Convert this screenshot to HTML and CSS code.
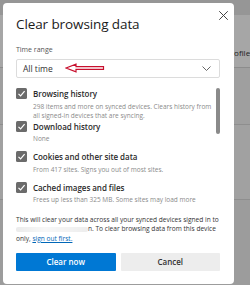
FILE: index.html
```html
<!DOCTYPE html>
<html lang="en">
<head>
    <meta charset="UTF-8">
    <meta name="viewport" content="width=device-width, initial-scale=1.0">
    <title>Clear browsing data</title>
    <link rel="stylesheet" href="styles.css">
</head>
<body>
    <div class="page">
        <div class="band band-top"></div>
        <div class="band band-profile"><span>Profile</span></div>
        <div class="band band-mid"></div>
        <div class="band band-low"></div>
        <div class="band band-bottom"></div>
    </div>

    <div class="dialog">
        <button class="close-btn" aria-label="Close">
            <svg width="9" height="9" viewBox="0 0 9 9" fill="none" stroke="#444" stroke-width="1" stroke-linecap="round">
                <line x1="0.5" y1="0.5" x2="8.5" y2="8.5"></line>
                <line x1="8.5" y1="0.5" x2="0.5" y2="8.5"></line>
            </svg>
        </button>
        <h2 class="title">Clear browsing data</h2>

        <div class="field-label">Time range</div>
        <div class="select">
            <span>All time</span>
            <svg class="chevron" width="9" height="5" viewBox="0 0 9 5" fill="none" stroke="#555" stroke-width="0.9">
                <polyline points="0.5 0.5 4.5 4.5 8.5 0.5"></polyline>
            </svg>
            <svg class="annotation" width="40" height="10" viewBox="0 0 40 10" fill="none" stroke="#c8102e" stroke-width="1.2" stroke-linejoin="miter">
                <polygon points="1 5 11 1.2 11 3.6 38.5 3.6 38.5 6.4 11 6.4 11 8.8"></polygon>
            </svg>
        </div>

        <div class="options">
            <div class="scrollbar"></div>
            <div class="option option-first">
                <span class="checkbox">
                    <svg width="11" height="11" viewBox="0 0 11 11" fill="none" stroke="#fff" stroke-width="1.2"><polyline points="2.5 5.8 4.6 7.9 8.6 3.2"></polyline></svg>
                </span>
                <div class="option-text">
                    <div class="option-title">Browsing history</div>
                    <div class="option-desc">298 items and more on synced devices. Clears history from all signed-in devices that are syncing.</div>
                </div>
            </div>
            <div class="option">
                <span class="checkbox">
                    <svg width="11" height="11" viewBox="0 0 11 11" fill="none" stroke="#fff" stroke-width="1.2"><polyline points="2.5 5.8 4.6 7.9 8.6 3.2"></polyline></svg>
                </span>
                <div class="option-text">
                    <div class="option-title">Download history</div>
                    <div class="option-desc">None</div>
                </div>
            </div>
            <div class="option">
                <span class="checkbox">
                    <svg width="11" height="11" viewBox="0 0 11 11" fill="none" stroke="#fff" stroke-width="1.2"><polyline points="2.5 5.8 4.6 7.9 8.6 3.2"></polyline></svg>
                </span>
                <div class="option-text">
                    <div class="option-title">Cookies and other site data</div>
                    <div class="option-desc">From 417 sites. Signs you out of most sites.</div>
                </div>
            </div>
            <div class="option">
                <span class="checkbox">
                    <svg width="11" height="11" viewBox="0 0 11 11" fill="none" stroke="#fff" stroke-width="1.2"><polyline points="2.5 5.8 4.6 7.9 8.6 3.2"></polyline></svg>
                </span>
                <div class="option-text">
                    <div class="option-title">Cached images and files</div>
                    <div class="option-desc">Frees up less than 325 MB. Some sites may load more</div>
                </div>
            </div>
        </div>

        <p class="notice">This will clear your data across all your synced devices signed in to <span class="blurred"></span>n. To clear browsing data from this device only, <a href="#">sign out first.</a></p>

        <div class="actions">
            <button class="btn btn-primary">Clear now</button>
            <button class="btn btn-secondary">Cancel</button>
        </div>
    </div>
</body>
</html>
```

FILE: styles.css
```css
:root {
    --accent: #0078d4;
    --link: #0067b8;
    --text-muted: #8a8a8a;
    --check-grey: #6b6b6b;
}
* {
    margin: 0;
    padding: 0;
    box-sizing: border-box;
}
body {
    font-family: 'Open Sans', 'Noto Sans', sans-serif;
    width: 250px;
    height: 285px;
    overflow: hidden;
    position: relative;
    background: #9e9e9e;
}
.page {
    display: flex;
    flex-direction: column;
    height: 100%;
}
.band {
    flex-shrink: 0;
}
.band-top {
    height: 15px;
    background: #969696;
}
.band-profile {
    height: 53px;
    background: #a6a6a6;
    padding: 32px 0 0 226px;
    font-size: 8px;
    color: #222;
    border-bottom: 1px solid #8c8c8c;
}
.band-mid {
    height: 57px;
    background: #9f9f9f;
    border-bottom: 1px solid #8e8e8e;
}
.band-low {
    height: 75px;
    background: #a1a1a1;
    border-bottom: 1px solid #8e8e8e;
}
.band-bottom {
    flex-grow: 1;
    background: #9c9c9c;
}

.dialog {
    position: absolute;
    top: 3px;
    left: 3px;
    width: 231px;
    height: 281px;
    background: #fff;
    border-radius: 4px;
    padding: 13px 14px 0 13px;
}
.close-btn {
    position: absolute;
    top: 8px;
    right: 6px;
    border: none;
    background: none;
    display: flex;
}
.title {
    font-size: 13.5px;
    font-weight: 400;
    color: #1b1b1b;
    line-height: 17px;
    letter-spacing: -0.1px;
}
.field-label {
    margin-top: 12px;
    font-size: 7px;
    color: #555;
    line-height: 10px;
}
.select {
    position: relative;
    margin-top: 4px;
    height: 19px;
    border: 1px solid #dcdcdc;
    border-radius: 2px;
    display: flex;
    align-items: center;
    justify-content: space-between;
    padding: 0 8px 0 6px;
    font-size: 8.5px;
    color: #333;
}
.annotation {
    position: absolute;
    left: 48px;
    top: 3px;
}

.options {
    position: relative;
    margin-top: 10px;
    display: flex;
    flex-direction: column;
    gap: 8px;
}
.scrollbar {
    position: absolute;
    right: 0;
    top: 0;
    width: 4px;
    height: 46px;
    border-radius: 2px;
    background: #8a8a8a;
}
.option {
    display: flex;
    gap: 6px;
    padding-right: 6px;
}
.option-first {
    margin-bottom: -7px;
}
.checkbox {
    width: 11px;
    height: 11px;
    border-radius: 1.5px;
    background: var(--check-grey);
    flex-shrink: 0;
    display: flex;
}
.option-title {
    font-size: 8px;
    font-weight: 600;
    color: #2b2b2b;
    line-height: 11px;
    letter-spacing: -0.05px;
}
.option-desc {
    margin-top: 2.5px;
    font-size: 6.5px;
    color: var(--text-muted);
    line-height: 9px;
}

.notice {
    margin-top: 11px;
    font-size: 6.6px;
    line-height: 9.3px;
    color: #333;
}
.blurred {
    display: inline-block;
    width: 72px;
    height: 5px;
    vertical-align: middle;
    background: linear-gradient(to right, rgba(0, 0, 0, 0.08), rgba(0, 0, 0, 0.03) 40%, rgba(0, 0, 0, 0.07));
    border-radius: 2px;
}
.notice a {
    display: inline-block;
    color: var(--link);
    line-height: 9.3px;
}

.actions {
    margin-top: 10px;
    display: flex;
    gap: 5px;
}
.btn {
    flex: 1;
    height: 18px;
    border: none;
    border-radius: 1px;
    font-family: 'Open Sans', 'Noto Sans', sans-serif;
    font-size: 8px;
    font-weight: 600;
}
.btn-primary {
    background: var(--accent);
    color: #fff;
}
.btn-secondary {
    background: #ededed;
    color: #333;
}
```
